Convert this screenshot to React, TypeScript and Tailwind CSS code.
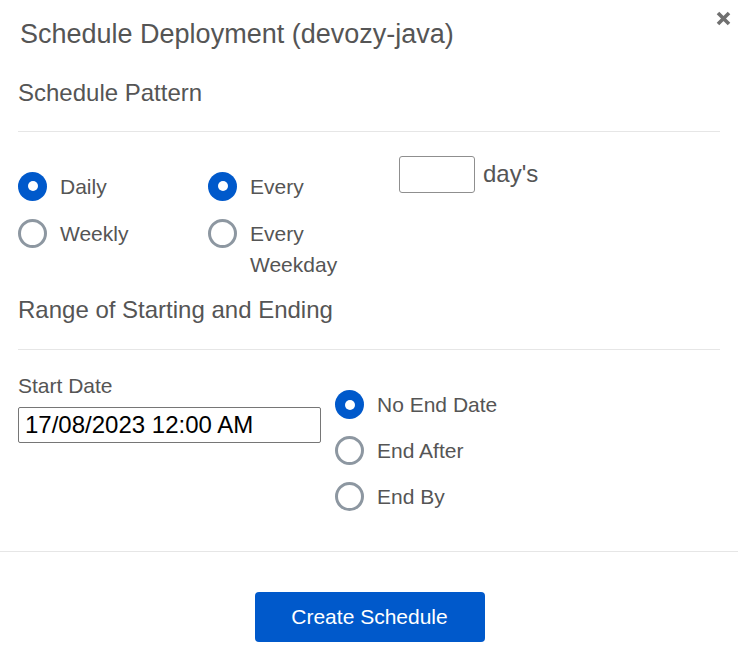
import React, { useState } from "react";

const BLUE = "bg-[#0059cb]";

interface RadioProps {
  checked: boolean;
  label: React.ReactNode;
  onClick: () => void;
}

const Radio: React.FC<RadioProps> = ({ checked, label, onClick }) => (
  <div className="flex items-start cursor-pointer" onClick={onClick}>
    <span
      className={
        checked
          ? `mt-[1px] w-[29px] h-[29px] rounded-full ${BLUE} flex items-center justify-center shrink-0`
          : "mt-[1px] w-[29px] h-[29px] rounded-full border-[3px] border-[#8d97a1] bg-white shrink-0"
      }
    >
      {checked && <span className="w-[10px] h-[10px] rounded-full bg-white" />}
    </span>
    <span className="ml-[13px] text-[21px] leading-[31px] text-[#555555]">{label}</span>
  </div>
);

const App: React.FC = () => {
  const [pattern, setPattern] = useState("daily");
  const [every, setEvery] = useState("every");
  const [ending, setEnding] = useState("none");
  const [days, setDays] = useState("");
  const [startDate, setStartDate] = useState("17/08/2023 12:00 AM");

  return (
    <div className="w-[738px] h-[658px] bg-white font-['Liberation_Sans',Arial,sans-serif] overflow-hidden">
      {/* header */}
      <div className="flex justify-between items-start">
        <h1 className="pl-[20px] pt-[18px] text-[27px] leading-[32px] text-[#555555] font-normal">
          Schedule Deployment (devozy-java)
        </h1>
        <button className="mt-[11px] mr-[7px] w-[15px] h-[15px] text-[#707070]">
          <svg viewBox="0 0 15 15" width="15" height="15">
            <path d="M2 2 L13 13 M13 2 L2 13" stroke="currentColor" strokeWidth="3.6" />
          </svg>
        </button>
      </div>

      <div className="px-[18px]">
        <h2 className="mt-[29px] text-[24px] leading-[28px] text-[#555555]">Schedule Pattern</h2>
        <hr className="mt-[24px] border-0 h-px bg-[#e6e6e6]" />

        <div className="mt-[24px] flex items-start">
          <div className="w-[190px] pt-[14.5px] flex flex-col gap-[16px]">
            <Radio checked={pattern === "daily"} label="Daily" onClick={() => setPattern("daily")} />
            <Radio checked={pattern === "weekly"} label="Weekly" onClick={() => setPattern("weekly")} />
          </div>
          <div className="w-[191px] pt-[14.5px] flex flex-col gap-[16px]">
            <Radio checked={every === "every"} label="Every" onClick={() => setEvery("every")} />
            <Radio
              checked={every === "weekday"}
              label={
                <>
                  Every
                  <br />
                  Weekday
                </>
              }
              onClick={() => setEvery("weekday")}
            />
          </div>
          <div className="flex items-center">
            <input
              value={days}
              onChange={(e) => setDays(e.target.value)}
              className="w-[76px] h-[37px] border border-[#8f8f8f] rounded-[3px] outline-none px-[6px] text-[20px]"
            />
            <span className="ml-[8px] text-[24px] leading-[28px] text-[#555555] -mt-[2px]">day's</span>
          </div>
        </div>

        <h2 className="mt-[16px] text-[24px] leading-[28px] text-[#555555]">Range of Starting and Ending</h2>
        <hr className="mt-[25px] border-0 h-px bg-[#e6e6e6]" />

        <div className="mt-[24px] flex items-start">
          <div className="w-[303px]">
            <label className="block text-[21px] leading-[24px] text-[#555555]">Start Date</label>
            <input
              value={startDate}
              onChange={(e) => setStartDate(e.target.value)}
              className="mt-[9px] w-[303px] h-[36px] border border-[#767676] rounded-[2px] px-[6px] text-[24px] text-black outline-none"
            />
          </div>
          <div className="ml-[14px] pt-[15.5px] flex flex-col gap-[15px]">
            <Radio checked={ending === "none"} label="No End Date" onClick={() => setEnding("none")} />
            <Radio checked={ending === "after"} label="End After" onClick={() => setEnding("after")} />
            <Radio checked={ending === "by"} label="End By" onClick={() => setEnding("by")} />
          </div>
        </div>
      </div>

      <hr className="mt-[39px] border-0 h-px bg-[#e6e6e6]" />

      <div className="flex justify-center pt-[40px]">
        <button className={`w-[230px] h-[50px] rounded-[4px] ${BLUE} text-white text-[21px] ml-[1px]`}>
          Create Schedule
        </button>
      </div>
    </div>
  );
};

export default App;
